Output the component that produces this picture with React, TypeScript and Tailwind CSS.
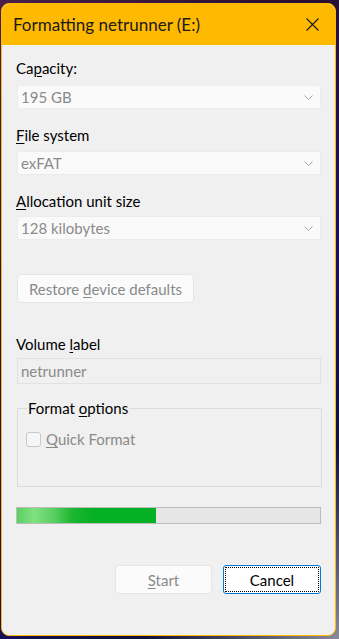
import React from 'react';

function Chevron() {
  return (
    <svg width="9" height="5" viewBox="0 0 9 5" className="shrink-0">
      <path d="M0.5 0.5 L4.5 4.5 L8.5 0.5" fill="none" stroke="#a8a8a8" strokeWidth="1" />
    </svg>
  );
}

function Combo({ value }: { value: string }) {
  return (
    <div className="flex h-[24px] w-[304px] items-center justify-between rounded-[2px] border border-[#ececec] bg-[#fafafa] pl-[3px] pr-[7px] text-[15px] leading-[20px] text-[#8a8a8a]">
      <span>{value}</span>
      <Chevron />
    </div>
  );
}

export default function App() {
  return (
    <div className="h-[639px] w-[339px] overflow-hidden bg-[linear-gradient(135deg,#4a2048_0%,#2a1030_30%,#1a1060_60%,#101040_80%,#8a8a9a_100%)] pl-[1px] pt-[3px] font-['Lato',sans-serif]">
      <div className="flex h-[633px] w-[335px] flex-col overflow-hidden rounded-[8px] border border-[#ffb900] bg-[#f0f0f0]">
        {/* Barra de título */}
        <div className="flex h-[41px] shrink-0 items-center justify-between bg-[#ffb900] pl-[11px] pr-[16px]">
          <span className="text-[17px] leading-[20px] text-[#1a1a1a]">Formatting netrunner (E:)</span>
          <svg width="13" height="13" viewBox="0 0 13 13">
            <path d="M0.5 0.5 L12.5 12.5 M12.5 0.5 L0.5 12.5" stroke="#1a1a1a" strokeWidth="1.1" />
          </svg>
        </div>

        <div className="flex flex-col pl-[14px] pt-[13px] text-[15px] leading-[20px] text-black">
          <span>
            Ca<u className="underline-offset-2">p</u>acity:
          </span>
          <div className="mt-[7px] ml-[1px]">
            <Combo value="195 GB" />
          </div>

          <span className="mt-[16px]">
            <u className="underline-offset-2">F</u>ile system
          </span>
          <div className="mt-[6px] ml-[1px]">
            <Combo value="exFAT" />
          </div>

          <span className="mt-[16px]">
            <u className="underline-offset-2">A</u>llocation unit size
          </span>
          <div className="mt-[5px] ml-[1px]">
            <Combo value="128 kilobytes" />
          </div>

          <div className="ml-[1px] mt-[34px] flex h-[29px] w-[177px] items-center justify-center rounded-[4px] border border-[#e6e6e6] bg-[#fbfbfb] text-[#8a8a8a]">
            <span>
              Restore <u className="underline-offset-2">d</u>evice defaults
            </span>
          </div>

          <span className="mt-[31px]">
            Volume <u className="underline-offset-2">l</u>abel
          </span>
          <div className="ml-[1px] mt-[4px] flex h-[26px] w-[304px] items-center border border-[#e2e2e2] bg-[#f0f0f0] pl-[3px] text-[#8a8a8a]">
            netrunner
          </div>

          {/* Opciones de formato */}
          <fieldset className="ml-[1px] mt-[15px] h-[88px] w-[305px] border border-[#dcdcdc] px-[8px] pb-0 pt-[12px]">
            <legend className="ml-[1px] px-[1px] text-[15px] leading-[18px] text-black">
              Format <u className="underline-offset-2">o</u>ptions
            </legend>
            <div className="flex items-center gap-[5px]">
              <span className="h-[15px] w-[15px] rounded-[3px] border border-[#c9c9c9] bg-[#f6f6f6]" />
              <span className="text-[#8a8a8a]">
                <u className="underline-offset-2">Q</u>uick Format
              </span>
            </div>
          </fieldset>

          {/* Barra de progreso */}
          <div className="mt-[20px] h-[17px] w-[305px] border border-[#bcbcbc] bg-[#e6e6e6]">
            <div className="h-full w-[139px] bg-[linear-gradient(90deg,#5ad064_0%,#80e180_12%,#5ad062_26%,#1db531_40%,#06b025_55%,#06b025_100%)]" />
          </div>

          {/* Botones */}
          <div className="mt-[41px] flex justify-end gap-[11px] pr-[14px]">
            <div className="flex h-[29px] w-[97px] items-center justify-center rounded-[4px] border border-[#e6e6e6] bg-[#fbfbfb] text-[#8a8a8a]">
              <span>
                <u className="underline-offset-2">S</u>tart
              </span>
            </div>
            <div className="flex h-[29px] w-[98px] items-center justify-center rounded-[3px] border border-[#0078d7] bg-white text-black outline-1 outline-offset-[-3px] outline-black outline-dotted">
              Cancel
            </div>
          </div>
        </div>
      </div>
    </div>
  );
}
